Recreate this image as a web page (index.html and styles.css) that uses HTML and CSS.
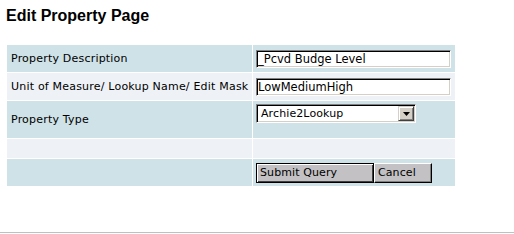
FILE: index.html
```html
<!DOCTYPE html>
<html lang="en">
  <head>
    <meta charset="UTF-8" />
    <title>Edit Property Page</title>
    <link rel="stylesheet" href="styles.css">
  </head>
  <body>
    <main class="page">
      <h1 class="page-title">Edit Property Page</h1>
      <form>
        <table class="prop-table">
          <tr class="row-dark">
            <td class="label">Property Description</td>
            <td class="value"><input class="field" type="text" value="_Pcvd Budge Level"></td>
          </tr>
          <tr class="row-light">
            <td class="label">Unit of Measure/ Lookup Name/ Edit Mask</td>
            <td class="value"><input class="field" type="text" value="LowMediumHigh"></td>
          </tr>
          <tr class="row-dark row-tall">
            <td class="label">Property Type</td>
            <td class="value value-top">
              <span class="select-wrap">
                <select class="select">
                  <option>Archie2Lookup</option>
                </select>
                <span class="select-arrow">
                  <svg width="7" height="4" viewBox="0 0 7 4"><path d="M0 0h7L3.5 4z" fill="#000"/></svg>
                </span>
              </span>
            </td>
          </tr>
          <tr class="row-light row-short">
            <td class="label"></td>
            <td class="value"></td>
          </tr>
          <tr class="row-dark">
            <td class="label"></td>
            <td class="value">
              <div class="actions">
                <button class="btn btn-default" type="button">Submit Query</button>
                <button class="btn btn-cancel" type="button">Cancel</button>
              </div>
            </td>
          </tr>
        </table>
      </form>
    </main>
    <div class="page-rule"></div>
  </body>
</html>
```

FILE: styles.css
```css
body {
  margin: 0;
  background: #fff;
  font-family: "DejaVu Sans", Verdana, sans-serif;
  font-size: 11px;
  color: #000;
}

.page {
  padding-left: 6px;
}

.page-title {
  margin: 0;
  padding-top: 7px;
  font-family: "Liberation Sans", Arial, sans-serif;
  font-size: 16px;
  line-height: 18px;
  font-weight: bold;
}

.prop-table {
  margin-top: 19px;
  width: 450px;
  table-layout: fixed;
  border-collapse: separate;
  border-spacing: 1px;
}

.prop-table td {
  box-sizing: border-box;
  height: 27px;
  padding: 0 3px;
  vertical-align: middle;
}

.prop-table .label {
  width: 245px;
  padding-left: 4px;
  white-space: nowrap;
  letter-spacing: 0.2px;
}

.row-dark td {
  background: #cee2e7;
}

.row-light td {
  background: #eef2f6;
}

.row-tall td {
  height: 37px;
}

.row-short td {
  height: 19px;
}

.value-top {
  vertical-align: top !important;
  padding-top: 3px !important;
}

.field,
.select {
  box-sizing: border-box;
  height: 18px;
  margin: 0;
  padding: 0 1px;
  font-family: "DejaVu Sans", Verdana, sans-serif;
  font-size: 11.5px;
  color: #000;
  background: #fff;
  border: 1px solid;
  border-color: #808080 #fff #fff #808080;
  box-shadow: inset 1px 1px 0 #000, inset -1px -1px 0 #d4d0c8;
  outline: none;
  vertical-align: top;
}

.field {
  width: 195px;
}

.select-wrap {
  position: relative;
  display: inline-block;
}

.select {
  width: 160px;
  height: 19px;
  padding-left: 4px;
  font-size: 11px;
  letter-spacing: 0.1px;
  appearance: none;
  -webkit-appearance: none;
  border-radius: 0;
}

.select-arrow {
  position: absolute;
  top: 2px;
  right: 2px;
  width: 16px;
  height: 15px;
  box-sizing: border-box;
  display: flex;
  align-items: center;
  justify-content: center;
  background: #d4d0c8;
  border: 1px solid;
  border-color: #d4d0c8 #404040 #404040 #d4d0c8;
  box-shadow: inset 1px 1px 0 #fff, inset -1px -1px 0 #808080;
  pointer-events: none;
}

.actions {
  display: flex;
}

.btn {
  box-sizing: border-box;
  height: 20px;
  margin: 0;
  padding: 0 3px;
  text-align: left;
  font-family: "DejaVu Sans", Verdana, sans-serif;
  font-size: 11px;
  letter-spacing: 0.1px;
  color: #000;
  background: #c3c1c3;
  border-radius: 0;
}

.btn-default {
  width: 118px;
  border: 1px solid #000;
  box-shadow: inset 1px 1px 0 #fff, inset -1px -1px 0 #404040;
}

.btn-cancel {
  width: 58px;
  border: 1px solid;
  border-color: #fff #000 #000 #fff;
  box-shadow: inset -1px -1px 0 #808080;
}

.page-rule {
  margin-top: 45px;
  border-top: 1px solid #c0c0c0;
}
```
